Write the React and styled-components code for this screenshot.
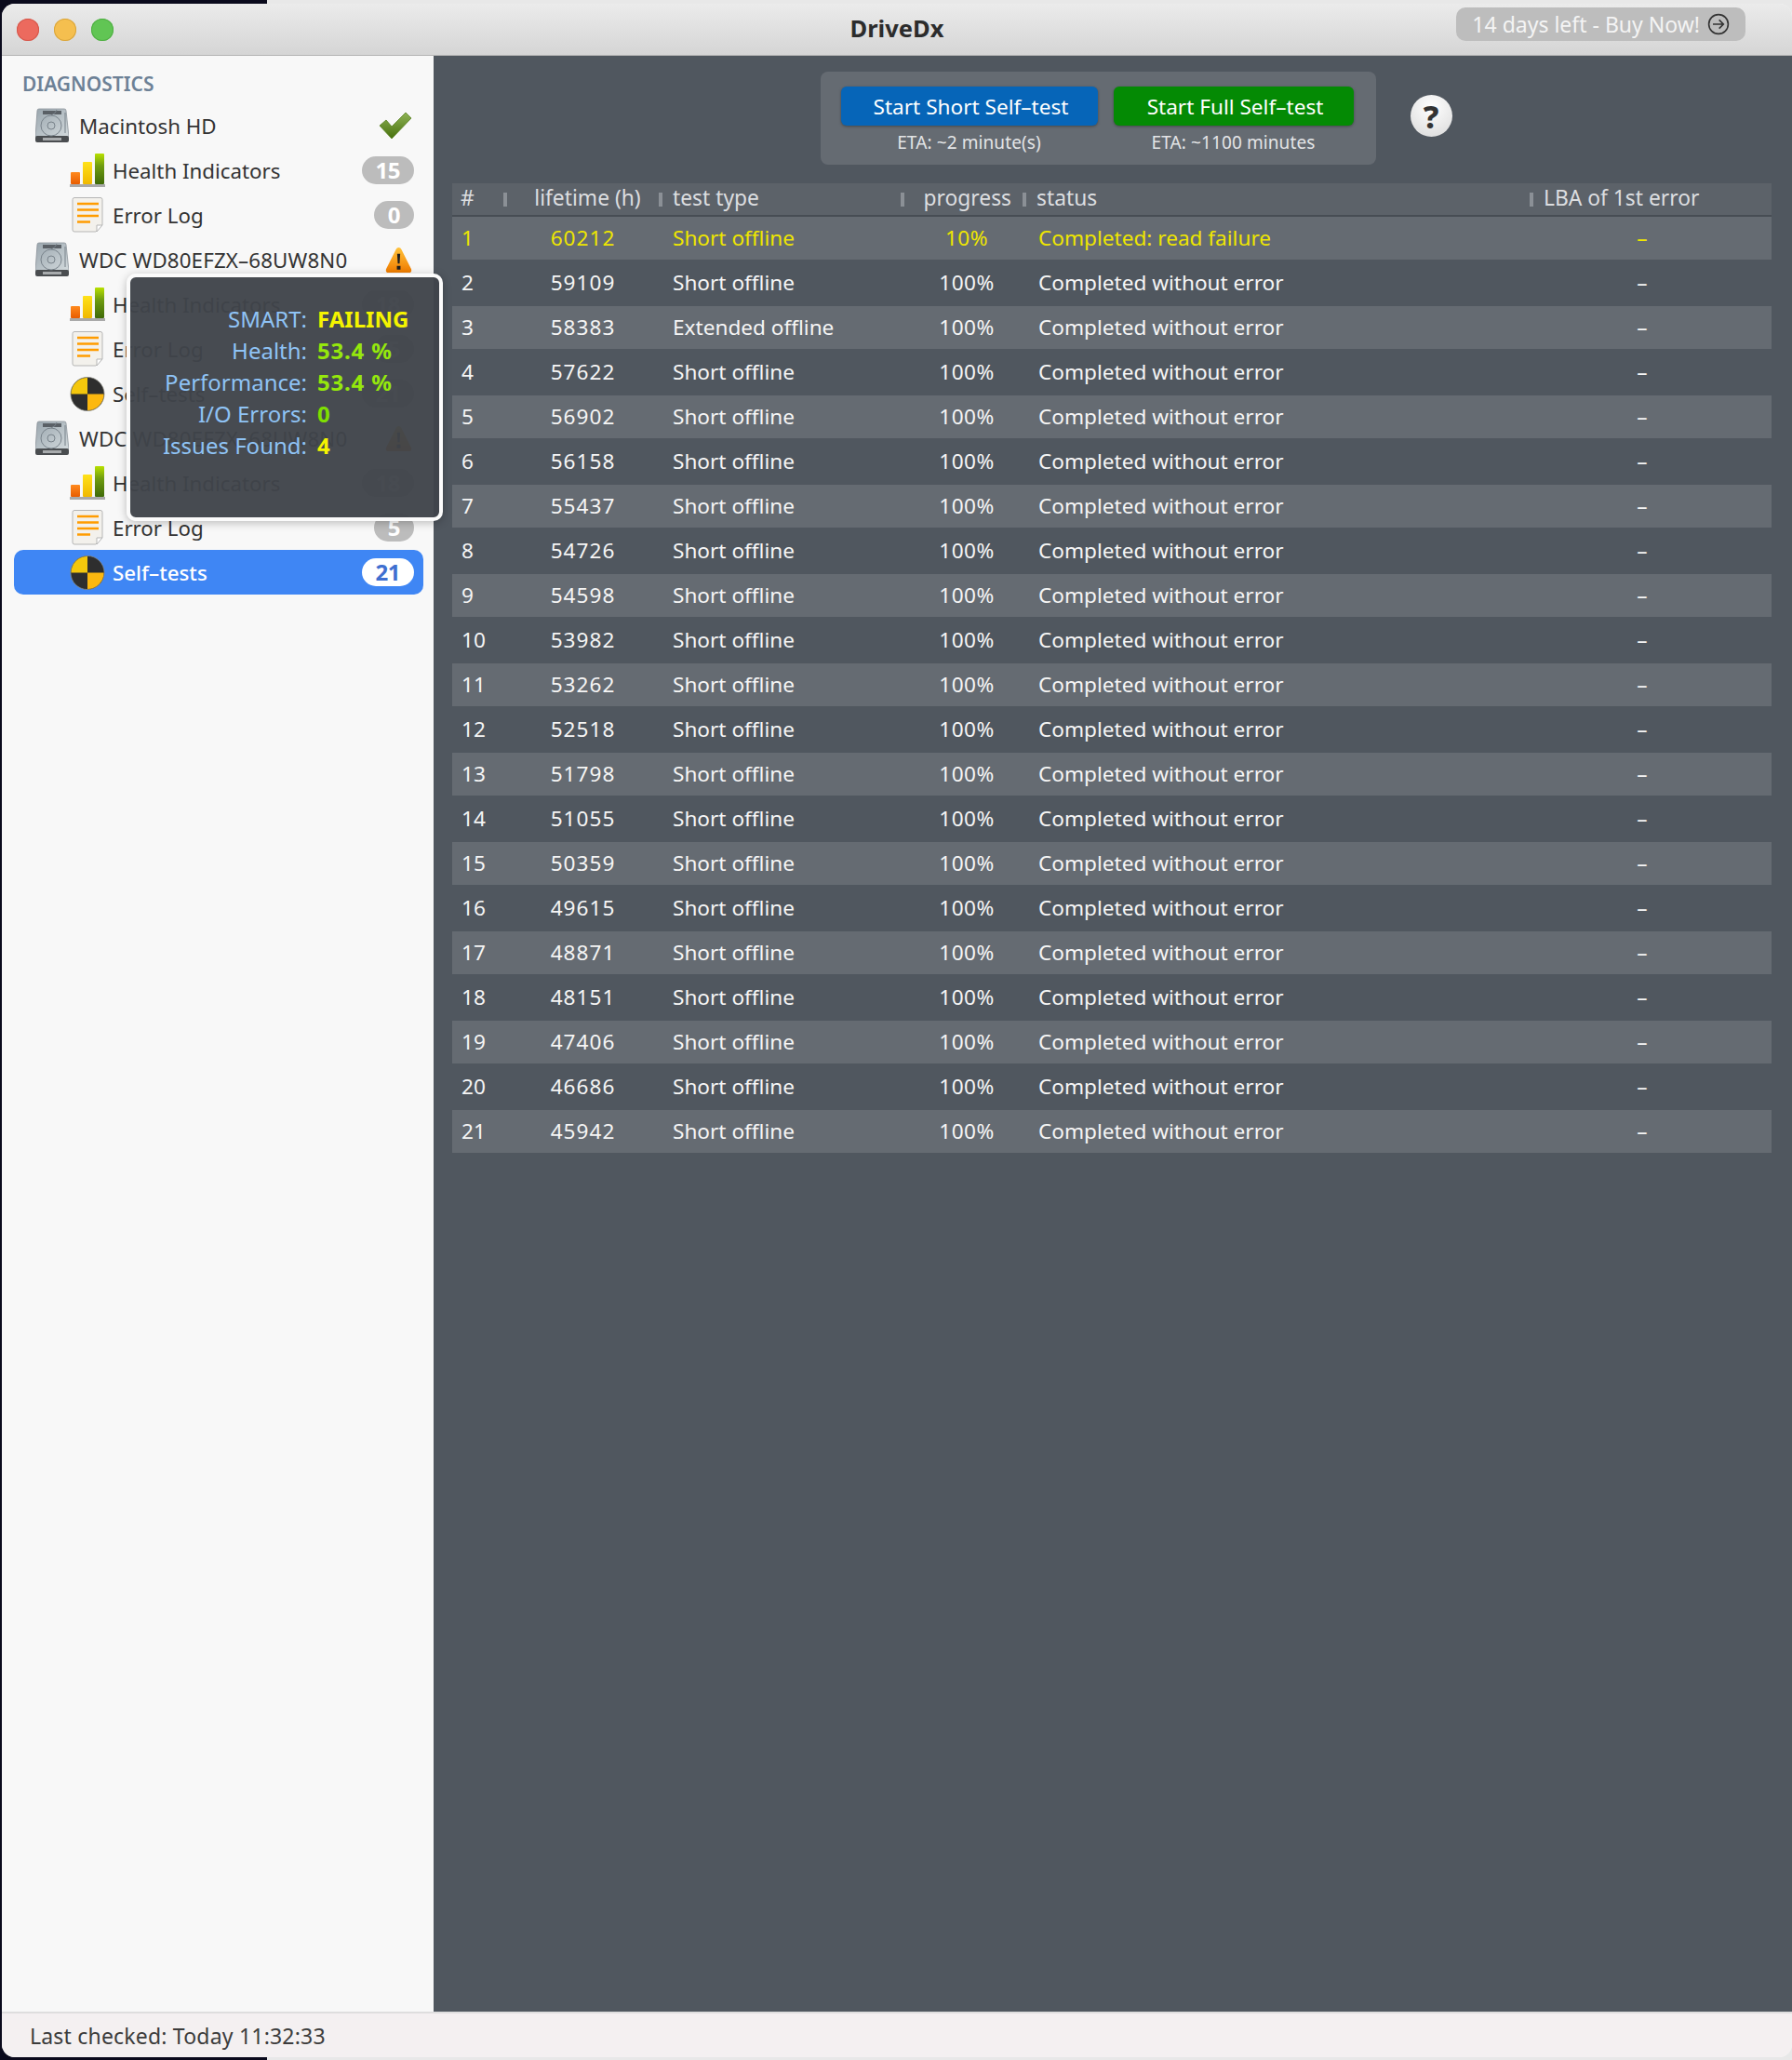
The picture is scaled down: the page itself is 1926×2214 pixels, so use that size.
import React from 'react';
import styled, { createGlobalStyle } from 'styled-components';

const Reset = createGlobalStyle`
  html, body { margin: 0; padding: 0; background: #0b0b1e; }
  #root { width: 1926px; height: 2214px; overflow: hidden; }
`;

const uiFont = `"Noto Sans", "DejaVu Sans", sans-serif`;

// desktop behind the window
const Desktop = styled.div`
  width: 1926px;
  height: 2214px;
  padding: 4px 0 3px 2px;
  box-sizing: border-box;
  background: linear-gradient(#0a0a1c, #0a0a1c) left / 287px 100% no-repeat, #e8e8e8;
  font-family: ${uiFont};
`;

const Window = styled.div`
  height: 100%;
  display: flex;
  flex-direction: column;
  border-radius: 14px;
  overflow: hidden;
  background: #f8f8f8;
`;

const TitleBar = styled.div`
  position: relative;
  flex: 0 0 56px;
  box-sizing: border-box;
  display: flex;
  align-items: center;
  justify-content: space-between;
  padding: 0 50px 0 16px;
  background: linear-gradient(#ebebeb, #d5d5d5);
  border-bottom: 1px solid #b4b4b4;
`;

const Lights = styled.div`
  display: flex;
  gap: 16px;
`;

const Light = styled.span`
  width: 24px;
  height: 24px;
  border-radius: 50%;
  background: ${p => p.$color};
  box-shadow: inset 0 0 0 1px ${p => p.$edge};
`;

const Title = styled.div`
  position: absolute;
  left: 0;
  right: 0;
  top: 8px;
  text-align: center;
  font-size: 25.5px;
  line-height: 36px;
  font-weight: 700;
  color: #2c2c2c;
  pointer-events: none;
`;

const BuyPill = styled.div`
  display: flex;
  align-items: center;
  gap: 8px;
  height: 36px;
  margin-top: -11px;
  padding: 0 17px 0 17px;
  border-radius: 10px;
  background: #bdbdbd;
  color: #f4f4f4;
  font-size: 23px;
`;

const Body = styled.div`
  flex: 1;
  display: flex;
  min-height: 0;
`;

const Sidebar = styled.div`
  position: relative;
  flex: 0 0 464px;
  box-sizing: border-box;
  padding: 17px 11px 0 13px;
  background: #f8f8f8;
`;

const SideHeading = styled.div`
  height: 26px;
  line-height: 26px;
  margin: 0 0 8px 9px;
  font-size: 21px;
  font-weight: 600;
  color: #6d8196;
`;

const SideRow = styled.div`
  display: flex;
  align-items: center;
  height: 48px;
  box-sizing: border-box;
  padding-right: 10px;
  padding-left: ${p => (p.$child ? '60px' : '22px')};
  border-radius: 10px;
  background: ${p => (p.$selected ? '#3f86f4' : 'transparent')};
  color: ${p => (p.$selected ? '#ffffff' : '#333333')};
  font-size: 22.300px;
  font-weight: ${p => (p.$selected ? 500 : 400)};
`;

const RowIcon = styled.span`
  flex: 0 0 auto;
  display: flex;
  width: 38px;
  justify-content: center;
  margin-right: ${p => (p.$child ? '8px' : '10px')};
`;

const RowLabel = styled.span`
  flex: 1;
  white-space: nowrap;
  letter-spacing: ${p => p.$tracking || 0}px;
`;

const Badge = styled.span`
  height: 30px;
  line-height: 30px;
  padding: 0 15px;
  border-radius: 15px;
  background: ${p => (p.$selected ? '#ffffff' : '#bcbcbc')};
  color: ${p => (p.$selected ? '#3f6fd0' : '#ffffff')};
  font-size: 24px;
  font-weight: 700;
  letter-spacing: -0.5px;
`;

const StatusIcon = styled.span`
  display: flex;
  margin-right: 2px;
`;

const HealthTip = styled.div`
  position: absolute;
  left: 134px;
  top: 234px;
  width: 340px;
  height: 266px;
  box-sizing: border-box;
  padding: 28px 0 0 0;
  border: 4px solid #fbfbfb;
  border-radius: 10px;
  background: rgba(64, 68, 74, 0.96);
  box-shadow: 0 2px 10px rgba(0, 0, 0, 0.25);
  display: grid;
  grid-template-columns: 190px 1fr;
  grid-auto-rows: 34px;
  column-gap: 11px;
  align-content: start;
  font-size: 24px;
  line-height: 34px;
`;

const TipKey = styled.span`
  text-align: right;
  color: #8fc3f5;
  white-space: nowrap;
`;

const TipValue = styled.span`
  color: ${p => p.$color};
  font-weight: 700;
  white-space: nowrap;
  letter-spacing: ${p => p.$tracking || 0}px;
`;

const Main = styled.div`
  flex: 1;
  min-width: 0;
  box-sizing: border-box;
  padding: 17px 22px 0 20px;
  background: #50575f;
  display: flex;
  flex-direction: column;
`;

const Controls = styled.div`
  display: flex;
  justify-content: center;
  align-items: center;
  gap: 37px;
  height: 100px;
  padding-left: 52px;
  margin-bottom: 20px;
`;

const ControlCard = styled.div`
  display: flex;
  gap: 17px;
  height: 100px;
  box-sizing: border-box;
  padding: 16px 24px 0 22px;
  border-radius: 8px;
  background: #656b72;
`;

const TestColumn = styled.div`
  display: flex;
  flex-direction: column;
  align-items: center;
  gap: 6px;
`;

const TestButton = styled.button`
  width: ${p => p.$width}px;
  height: 42px;
  padding: 0 0 0 4px;
  border: 0;
  border-radius: 6px;
  background: ${p => p.$bg};
  box-shadow: 0 1px 3px rgba(0, 0, 0, 0.35);
  color: #ffffff;
  font-family: ${uiFont};
  font-size: 22.600px;
`;

const Eta = styled.div`
  font-size: 19px;
  letter-spacing: 0.1px;
  line-height: 24px;
  color: #e3e4e6;
`;

const HelpBall = styled.div`
  width: 45px;
  height: 45px;
  margin-bottom: 5px;
  border-radius: 50%;
  display: flex;
  align-items: center;
  justify-content: center;
  background: radial-gradient(circle at 50% 30%, #ffffff, #d9d9d9);
  color: #333333;
  font-size: 34px;
  font-weight: 800;
`;

const columns = '57px 167px 260px 131px 545px 1fr';

const HeaderRow = styled.div`
  display: grid;
  grid-template-columns: ${columns};
  height: 34px;
  background: #5c6269;
  border-bottom: 2px solid #474d54;
  color: #dcdee0;
  font-size: 22.800px;
  line-height: 32px;
`;

const HeadCell = styled.div`
  position: relative;
  padding-left: ${p => p.$pad || 0}px;
  padding-right: ${p => p.$padRight || 0}px;
  text-align: ${p => p.$align || 'left'};
  white-space: nowrap;
  &::after {
    content: '';
    display: ${p => (p.$last ? 'none' : 'block')};
    position: absolute;
    right: -2px;
    top: 10px;
    width: 4px;
    height: 15px;
    background: #8b9096;
  }
`;

const TestRow = styled.div`
  display: grid;
  grid-template-columns: ${columns};
  align-items: center;
  height: 48px;
  box-sizing: border-box;
  padding-bottom: 3px;
  background: ${p => (p.$odd ? 'linear-gradient(#656b72, #656b72) top / 100% 46px no-repeat' : 'transparent')};
  color: ${p => (p.$failed ? '#eee600' : '#f5f5f5')};
  font-size: 22.600px;
`;

const Cell = styled.div`
  padding-left: ${p => p.$pad || 0}px;
  padding-right: ${p => p.$padRight || 0}px;
  text-align: ${p => p.$align || 'left'};
  letter-spacing: ${p => p.$tracking || 0}px;
  white-space: nowrap;
`;

const StatusBar = styled.div`
  flex: 0 0 49px;
  box-sizing: border-box;
  display: flex;
  align-items: center;
  padding-left: 30px;
  border-top: 2px solid #dedede;
  background: #f4f0f1;
  color: #3c3c3c;
  font-size: 23px;
  letter-spacing: 0.2px;
`;

const DiskIcon = () => (
  <svg width="36" height="38" viewBox="0 0 36 38">
    <defs>
      <linearGradient id="diskBody" x1="0" y1="0" x2="1" y2="1">
        <stop offset="0" stopColor="#9aa6ae" />
        <stop offset="1" stopColor="#d3dadd" />
      </linearGradient>
    </defs>
    <path d="M4 1h27q2 0 2 2l3 28H0L2 3q0-2 2-2z" fill="url(#diskBody)" stroke="#8a9299" strokeWidth="0.8" />
    <rect x="0" y="30" width="36" height="7" rx="2" fill="#4a4d50" />
    <rect x="8" y="32" width="20" height="3" fill="#a8abad" />
    <rect x="8" y="3" width="20" height="4" fill="#5a6066" />
    <circle cx="17" cy="19" r="11" fill="none" stroke="#78828a" strokeWidth="1" />
    <circle cx="17" cy="19" r="4" fill="none" stroke="#78828a" strokeWidth="1" />
    <path d="M17 8q5-2 6-6M32 5v22" fill="none" stroke="#78828a" strokeWidth="1" />
  </svg>
);

const BarsIcon = () => (
  <svg width="38" height="38" viewBox="0 0 38 38">
    <defs>
      <linearGradient id="barRed" x1="0" y1="0" x2="0" y2="1"><stop offset="0" stopColor="#ff8a1e" /><stop offset="1" stopColor="#e85c00" /></linearGradient>
      <linearGradient id="barYellow" x1="0" y1="0" x2="0" y2="1"><stop offset="0" stopColor="#ffe21a" /><stop offset="1" stopColor="#f0b800" /></linearGradient>
      <linearGradient id="barGreen" x1="0" y1="0" x2="0" y2="1"><stop offset="0" stopColor="#b8e000" /><stop offset="0.4" stopColor="#6f9c10" /><stop offset="1" stopColor="#3f6a08" /></linearGradient>
    </defs>
    <rect x="1" y="21" width="10" height="13" rx="1" fill="url(#barRed)" />
    <rect x="14" y="10" width="10" height="24" rx="1" fill="url(#barYellow)" />
    <rect x="27" y="1" width="10" height="33" rx="1" fill="url(#barGreen)" />
    <rect x="0" y="34" width="38" height="3" fill="#a9a9a9" />
  </svg>
);

const LogIcon = () => (
  <svg width="34" height="38" viewBox="0 0 34 38">
    <path d="M3 .5h28q2 0 2 2V30l-7 7H3q-2 0-2-2V2.500q0-2 2-2z" fill="#f3f1ec" stroke="#b5b5b5" />
    <path d="M33 30h-6v7z" fill="#ffffff" stroke="#b5b5b5" />
    <path d="M6 7h23M6 13.500h23M6 20h23M6 26.500h14" stroke="#ff9c00" strokeWidth="2.400" />
  </svg>
);

const CrashIcon = () => (
  <svg width="39" height="39" viewBox="0 0 40 40">
    <circle cx="20" cy="20" r="19" fill="#2e2e2e" stroke="#8a8a80" strokeWidth="0.8" />
    <path d="M20 20V1.500A18.500 18.500 0 0 0 1.500 20z" fill="#f4c70c" />
    <path d="M20 20v18.500A18.500 18.500 0 0 0 38.500 20z" fill="#fcb80f" />
  </svg>
);

const CheckIcon = () => (
  <svg width="36" height="30" viewBox="0 0 36 30">
    <defs>
      <linearGradient id="checkFill" x1="0" y1="0" x2="0" y2="1"><stop offset="0" stopColor="#8fb356" /><stop offset="1" stopColor="#46700c" /></linearGradient>
    </defs>
    <path d="M1 15l7-6 6 7L29 1l6 6-21 22z" fill="url(#checkFill)" stroke="#567f1e" strokeWidth="0.8" />
  </svg>
);

const WarnIcon = () => (
  <svg width="29" height="29" viewBox="0 0 30 30">
    <defs>
      <linearGradient id="warnFill" x1="0" y1="0" x2="0" y2="1"><stop offset="0" stopColor="#ffc23a" /><stop offset="1" stopColor="#f07c00" /></linearGradient>
    </defs>
    <path d="M15 1q2 0 3 2l11 22q1 4-3 4H4q-4 0-3-4L12 3q1-2 3-2z" fill="url(#warnFill)" />
    <path d="M13.300 8h3.400l-.7 11h-2zM13 21.500h4v4h-4z" fill="#1d1d1d" />
  </svg>
);

const ArrowCircle = () => (
  <svg width="24" height="24" viewBox="0 0 18 18" fill="none" stroke="#333" strokeWidth="1.200">
    <circle cx="9" cy="9" r="7.800" />
    <path d="M4.500 9h8.500M9.500 5.500L13 9l-3.500 3.500" />
  </svg>
);

const tree = [
  { kind: 'disk', label: 'Macintosh HD', status: 'ok' },
  { kind: 'bars', label: 'Health Indicators', count: 15 },
  { kind: 'log', label: 'Error Log', count: 0 },
  { kind: 'disk', label: 'WDC WD80EFZX–68UW8N0', status: 'warn', tracking: 0.15 },
  { kind: 'bars', label: 'Health Indicators', count: 18 },
  { kind: 'log', label: 'Error Log', count: 5 },
  { kind: 'crash', label: 'Self–tests', count: 21 },
  { kind: 'disk', label: 'WDC WD80EFZX–68UW8N0', status: 'warn', tracking: 0.15 },
  { kind: 'bars', label: 'Health Indicators', count: 18 },
  { kind: 'log', label: 'Error Log', count: 5 },
  { kind: 'crash', label: 'Self–tests', count: 21, selected: true },
];

const icons = { disk: DiskIcon, bars: BarsIcon, log: LogIcon, crash: CrashIcon };

const lifetimes = [60212, 59109, 58383, 57622, 56902, 56158, 55437, 54726, 54598, 53982, 53262, 52518, 51798, 51055, 50359, 49615, 48871, 48151, 47406, 46686, 45942];

export default function App() {
  return (
    <>
      <Reset />
      <Desktop>
        <Window>
          <TitleBar>
            <Lights>
              <Light $color="#ec6a5e" $edge="#d5574b" />
              <Light $color="#f5bf4f" $edge="#d9a53c" />
              <Light $color="#61c554" $edge="#4fae43" />
            </Lights>
            <Title>DriveDx</Title>
            <BuyPill>14 days left - Buy Now! <ArrowCircle /></BuyPill>
          </TitleBar>
          <Body>
            <Sidebar>
              <SideHeading>DIAGNOSTICS</SideHeading>
              {tree.map((item, i) => {
                const Icon = icons[item.kind];
                const child = item.kind !== 'disk';
                return (
                  <SideRow key={i} $child={child} $selected={item.selected}>
                    <RowIcon $child={child}><Icon /></RowIcon>
                    <RowLabel $tracking={item.tracking}>{item.label}</RowLabel>
                    {item.count !== undefined && <Badge $selected={item.selected}>{item.count}</Badge>}
                    {item.status === 'ok' && <StatusIcon><CheckIcon /></StatusIcon>}
                    {item.status === 'warn' && <StatusIcon><WarnIcon /></StatusIcon>}
                  </SideRow>
                );
              })}
              <HealthTip>
                <TipKey>SMART:</TipKey><TipValue $color="#f4f400">FAILING</TipValue>
                <TipKey>Health:</TipKey><TipValue $color="#95e80c" $tracking={0.8}>53.4 %</TipValue>
                <TipKey>Performance:</TipKey><TipValue $color="#95e80c" $tracking={0.8}>53.4 %</TipValue>
                <TipKey>I/O Errors:</TipKey><TipValue $color="#7fe000">0</TipValue>
                <TipKey>Issues Found:</TipKey><TipValue $color="#f4f400">4</TipValue>
              </HealthTip>
            </Sidebar>
            <Main>
              <Controls>
                <ControlCard>
                  <TestColumn>
                    <TestButton $width={276} $bg="#0665b8">Start Short Self–test</TestButton>
                    <Eta>ETA: ~2 minute(s)</Eta>
                  </TestColumn>
                  <TestColumn>
                    <TestButton $width={258} $bg="#048a04">Start Full Self–test</TestButton>
                    <Eta>ETA: ~1100 minutes</Eta>
                  </TestColumn>
                </ControlCard>
                <HelpBall>?</HelpBall>
              </Controls>
              <HeaderRow>
                <HeadCell $pad={9}>#</HeadCell>
                <HeadCell $align="center" $pad={10}>lifetime (h)</HeadCell>
                <HeadCell $pad={13}>test type</HeadCell>
                <HeadCell $align="right" $padRight={14}>progress</HeadCell>
                <HeadCell $pad={13}>status</HeadCell>
                <HeadCell $pad={13} $last>LBA of 1st error</HeadCell>
              </HeaderRow>
              {lifetimes.map((hours, i) => (
                <TestRow key={hours} $odd={i % 2 === 0} $failed={i === 0}>
                  <Cell $pad={10}>{i + 1}</Cell>
                  <Cell $align="center" $tracking={1}>{hours}</Cell>
                  <Cell $pad={13}>{i === 2 ? 'Extended offline' : 'Short offline'}</Cell>
                  <Cell $align="center" $pad={7} $tracking={0.5}>{i === 0 ? '10%' : '100%'}</Cell>
                  <Cell $pad={15}>{i === 0 ? 'Completed: read failure' : 'Completed without error'}</Cell>
                  <Cell $align="center" $padRight={20}>–</Cell>
                </TestRow>
              ))}
            </Main>
          </Body>
          <StatusBar>Last checked: Today 11:32:33</StatusBar>
        </Window>
      </Desktop>
    </>
  );
}
